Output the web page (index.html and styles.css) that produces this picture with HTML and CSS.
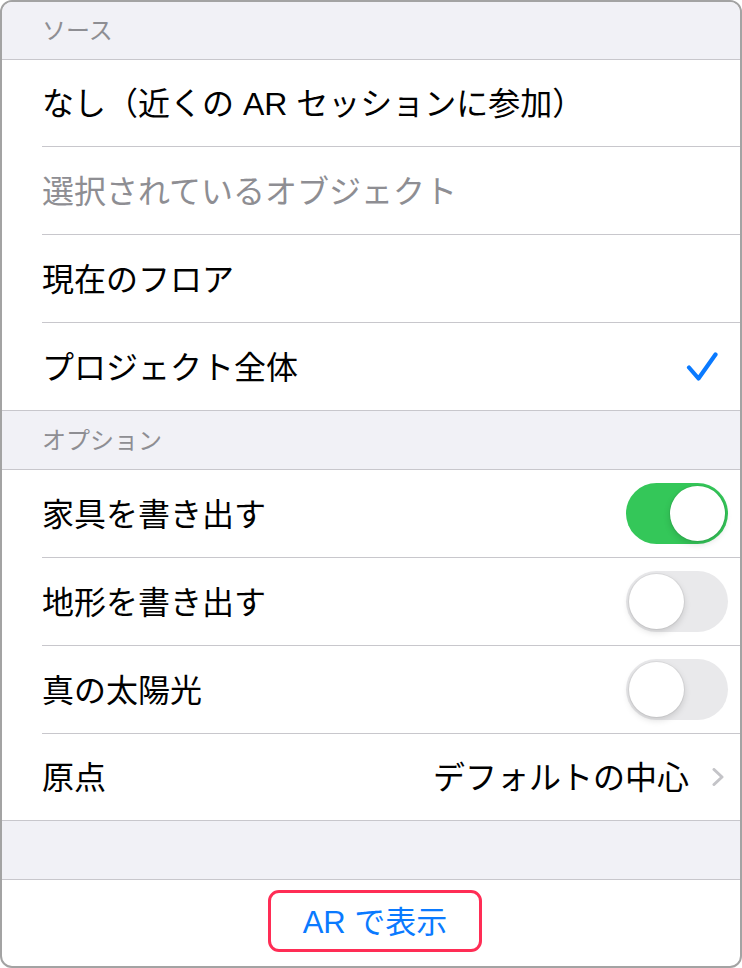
FILE: index.html
```html
<!DOCTYPE html>
<html lang="ja">
<head>
<meta charset="utf-8">
<title>AR</title>
<link rel="stylesheet" href="styles.css">
</head>
<body>
<div class="sheet">
  <div class="group-header first">ソース</div>
  <div class="row r1"><div class="row-inner line">なし（近くの AR セッションに参加）</div></div>
  <div class="row"><div class="row-inner line disabled">選択されているオブジェクト</div></div>
  <div class="row"><div class="row-inner line">現在のフロア</div></div>
  <div class="row"><div class="row-inner checked">
    <span class="label">プロジェクト全体</span>
    <svg class="check" width="32" height="32" viewBox="0 0 32 32"><path d="M3 16.5 L12.5 27.5 L29.5 3.5" fill="none" stroke="#0a7aff" stroke-width="4.2" stroke-linecap="round" stroke-linejoin="round"/></svg>
  </div></div>
  <div class="group-header second">オプション</div>
  <div class="row"><div class="row-inner line toggle-row">
    <span class="label">家具を書き出す</span>
    <span class="switch on"><span class="knob"></span></span>
  </div></div>
  <div class="row"><div class="row-inner line toggle-row">
    <span class="label">地形を書き出す</span>
    <span class="switch"><span class="knob"></span></span>
  </div></div>
  <div class="row"><div class="row-inner line toggle-row">
    <span class="label">真の太陽光</span>
    <span class="switch"><span class="knob"></span></span>
  </div></div>
  <div class="row last"><div class="row-inner nav-row">
    <span class="label">原点</span>
    <span class="value">デフォルトの中心</span>
    <svg class="chev" width="12" height="18" viewBox="0 0 12 18"><path d="M2 1.5 L10 9 L2 16.5" fill="none" stroke="#c4c4c8" stroke-width="3" stroke-linecap="round" stroke-linejoin="round"/></svg>
  </div></div>
  <div class="spacer"></div>
  <div class="footer">
    <button class="ar-button">AR で表示</button>
  </div>
</div>
</body>
</html>
```
FILE: styles.css
```css
html, body {
  margin: 0;
  padding: 0;
  background: #ffffff;
}
body {
  font-family: "Liberation Sans", "Noto Sans CJK JP", sans-serif;
  color: #000;
}
.sheet {
  width: 742px;
  height: 968px;
  box-sizing: border-box;
  border: 2px solid #a3a3a3;
  border-radius: 12px;
  overflow: hidden;
  display: flex;
  flex-direction: column;
  background: #fff;
}
.group-header {
  background: #f1f1f6;
  color: #8e8e93;
  font-size: 24px;
  padding-left: 40px;
  padding-bottom: 4px;
  box-sizing: border-box;
  display: flex;
  align-items: center;
  border-bottom: 1px solid #c8c7cc;
  flex: none;
}
.group-header.first {
  height: 58px;
}
.group-header.second {
  height: 60px;
  border-top: 1px solid #c8c7cc;
}
.row {
  padding-left: 40px;
  flex: none;
}
.row-inner {
  height: 87px;
  display: flex;
  align-items: center;
  font-size: 32px;
  padding-right: 20px;
  padding-bottom: 4px;
  box-sizing: border-box;
}
.row-inner.line {
  border-bottom: 1px solid #c8c7cc;
  height: 88px;
}
.r1 .row-inner.line {
  height: 87px;
}
.disabled {
  color: #8e8e93;
}
.label {
  flex: 1;
}
.checked {
  padding-right: 22px;
  padding-bottom: 0;
}
.check {
  display: block;
}
.toggle-row {
  padding-right: 12px;
  padding-bottom: 0;
}
.toggle-row .label {
  padding-bottom: 4px;
}
.checked .label {
  padding-bottom: 4px;
}
.switch {
  width: 102px;
  height: 61px;
  border-radius: 31px;
  background: #e9e9eb;
  box-sizing: border-box;
  display: flex;
  align-items: center;
  padding: 0 3px;
  justify-content: flex-start;
}
.switch.on {
  background: #34c759;
  justify-content: flex-end;
}
.knob {
  width: 55px;
  height: 55px;
  border-radius: 50%;
  background: #fff;
  box-shadow: 0 3px 7px rgba(0, 0, 0, 0.15), 0 0 0 1px rgba(0, 0, 0, 0.05);
}
.nav-row {
  padding-right: 16px;
  padding-bottom: 0;
  height: 86px;
}
.nav-row .label,
.nav-row .value {
  padding-bottom: 4px;
}
.value {
  margin-right: 23px;
}
.chev {
  display: block;
}
.spacer {
  height: 60px;
  background: #f1f1f6;
  border-top: 1px solid #c8c7cc;
  border-bottom: 1px solid #c8c7cc;
  box-sizing: border-box;
  flex: none;
}
.footer {
  flex: 1;
  display: flex;
  justify-content: center;
  align-items: center;
  padding-bottom: 5px;
}
.ar-button {
  width: 214px;
  height: 62px;
  box-sizing: border-box;
  border: 3px solid #ff2d55;
  border-radius: 11px;
  background: #fff;
  color: #0a7aff;
  font-family: "Liberation Sans", "Noto Sans CJK JP", sans-serif;
  font-size: 31px;
  padding: 0 0 3px 0;
  margin-left: 8px;
}
```
